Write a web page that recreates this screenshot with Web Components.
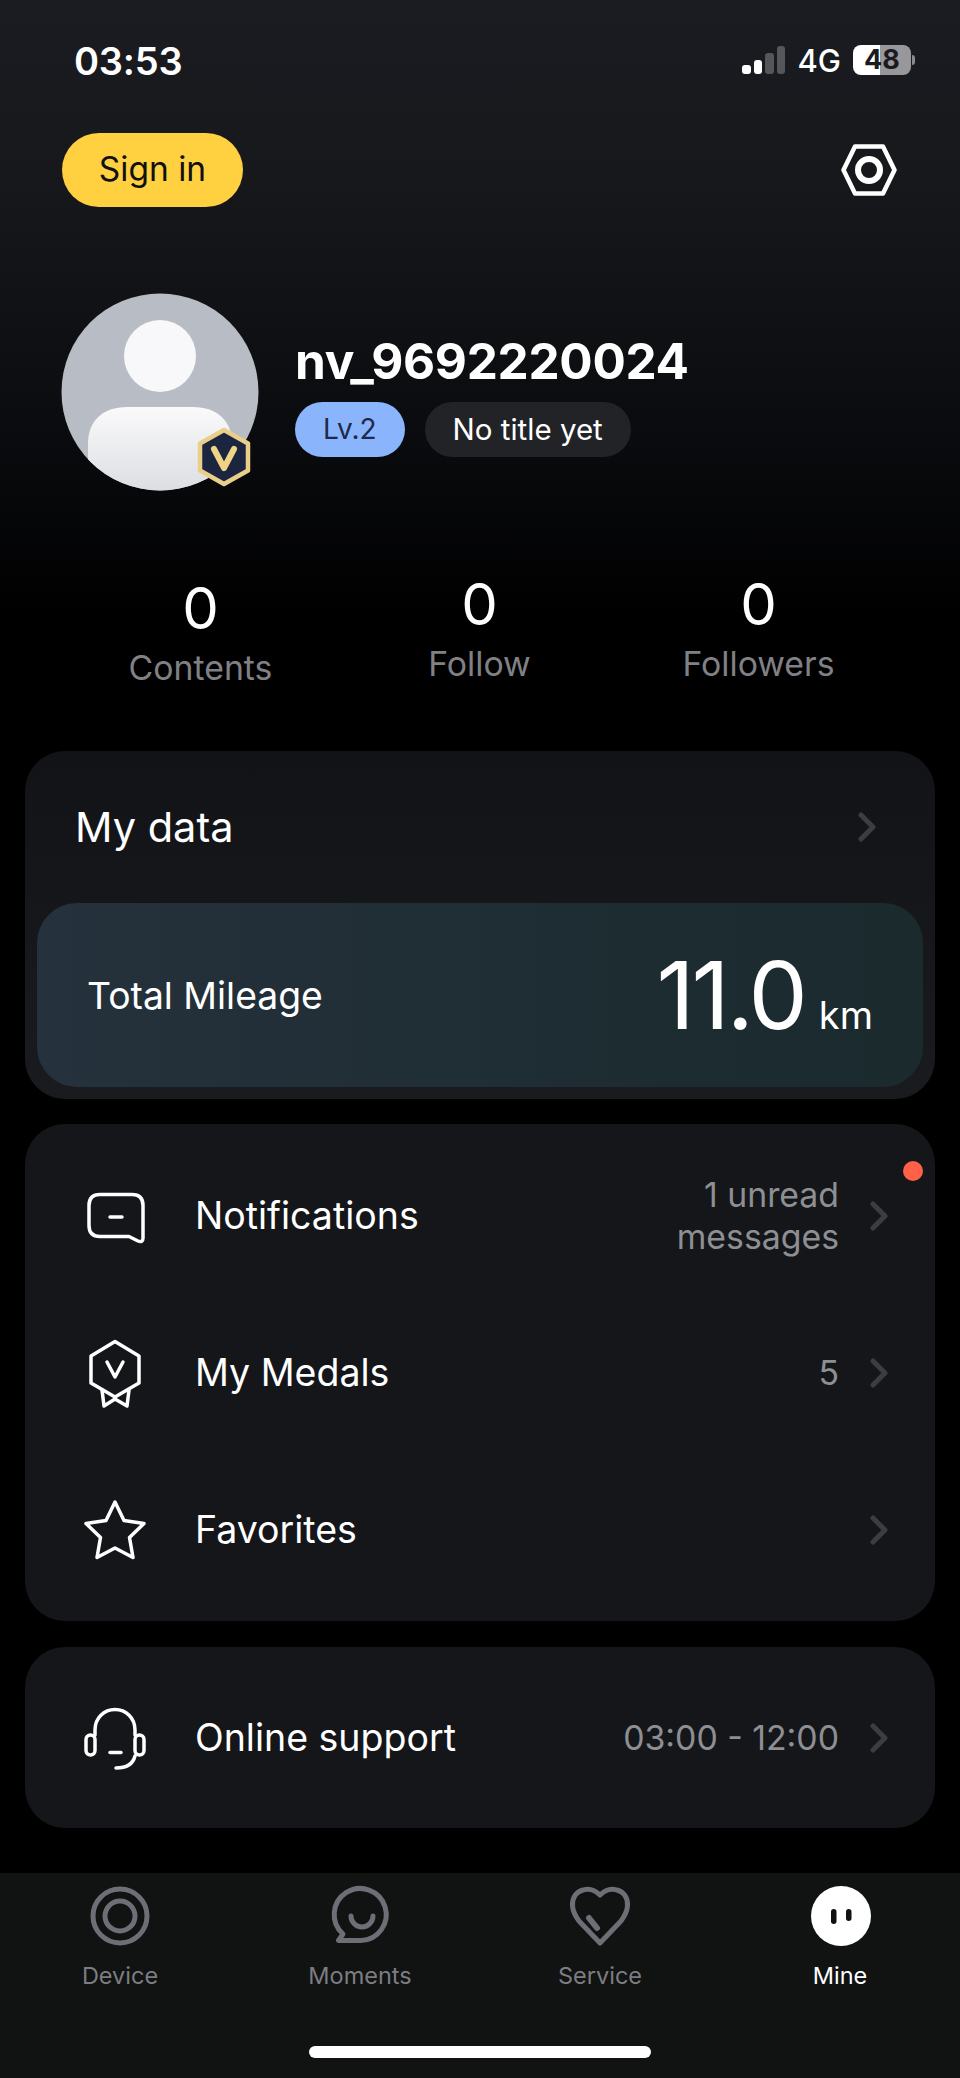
<!DOCTYPE html>
<html lang="en">
<head>
<meta charset="utf-8">
<title>Mine</title>
<style>
    html, body { margin: 0; padding: 0; background: #000; }
    body { font-family: Inter, "Liberation Sans", sans-serif; color: #fff; }
    svg { display: block; overflow: visible; }
</style>
</head>
<body>
<app-page>
    <status-bar time="03:53" network="4G" battery="48"></status-bar>
    <top-actions></top-actions>
    <profile-head name="nv_9692220024" level="Lv.2" title="No title yet"></profile-head>
    <stat-row>
        <stat-item value="0" label="Contents" class="low"></stat-item>
        <stat-item value="0" label="Follow"></stat-item>
        <stat-item value="0" label="Followers"></stat-item>
    </stat-row>
    <data-card title="My data" label="Total Mileage" value="11.0" unit="km"></data-card>
    <menu-card style="margin-top:25px">
        <menu-row label="Notifications" dot>
            <svg slot="icon" width="60" height="54" viewBox="0 0 60 54" fill="none" stroke="#fff" stroke-width="3.500" stroke-linecap="round" stroke-linejoin="round">
                <path d="M15 5.500H47Q58 5.500 58 16.500V49Q58 54 53 52L44 47.500H15Q4 47.500 4 36.500V16.500Q4 5.500 15 5.500Z"/>
                <path d="M25 28H37"/>
            </svg>
            <span slot="value">1 unread<br>messages</span>
        </menu-row>
        <menu-row label="My Medals" value="5">
            <svg slot="icon" width="60" height="72" viewBox="0 0 60 72" fill="none" stroke="#fff" stroke-width="3.500" stroke-linecap="round" stroke-linejoin="round">
                <path d="M30 4.500L54 19V46L30 60L6 46V19Z"/>
                <path d="M22 25L30 40L38 25"/>
                <path d="M17 53L19 69L30 62L42 69L44 53"/>
            </svg>
        </menu-row>
        <menu-row label="Favorites">
            <svg slot="icon" width="64" height="62" viewBox="0 0 64 62" fill="none" stroke="#fff" stroke-width="3.500" stroke-linecap="round" stroke-linejoin="round">
                <path d="M32 3L41 21.500L61 24.500L46.500 38.500L50 58.500L32 49L14 58.500L17.500 38.500L3 24.500L23 21.500Z"/>
            </svg>
        </menu-row>
    </menu-card>
    <menu-card style="margin-top:26px">
        <menu-row label="Online support" value="03:00 - 12:00" style="--row:155px">
            <svg slot="icon" width="64" height="62" viewBox="0 0 64 62" fill="none" stroke="#fff" stroke-width="3.500" stroke-linecap="round" stroke-linejoin="round">
                <path d="M12 28V23C12 11 21 2.500 32 2.500S52 11 52 23V28"/>
                <rect x="3" y="28" width="9" height="20" rx="4.500"/>
                <rect x="52" y="28" width="9" height="20" rx="4.500"/>
                <path d="M27 45.500H38"/>
                <path d="M52 49C50 57 44 61 33 61"/>
            </svg>
        </menu-row>
    </menu-card>
    <tab-bar>
        <tab-item label="Device">
            <svg width="62" height="62" viewBox="0 0 62 62" fill="none" stroke="#6d6e76" stroke-width="5">
                <circle cx="31" cy="31" r="27"/>
                <circle cx="31" cy="31" r="15"/>
            </svg>
        </tab-item>
        <tab-item label="Moments">
            <svg width="62" height="62" viewBox="0 0 62 62" fill="none" stroke="#6d6e76" stroke-width="5" stroke-linecap="round" stroke-linejoin="round">
                <path d="M9.500 55.500H32A26 26 0 1 0 14 49Z"/>
                <path d="M22 31A11 11 0 0 0 44 31"/>
            </svg>
        </tab-item>
        <tab-item label="Service">
            <svg width="62" height="62" viewBox="0 0 62 62" fill="none" stroke="#6d6e76" stroke-width="5" stroke-linecap="round" stroke-linejoin="round">
                <path d="M31 10C26 5 20 3 14 5C7 7 3 13 3.500 21C4 27 7 32 10 36L31 58L52 36C55 32 58 27 58.500 21C59 13 55 7 48 5C42 3 36 5 31 10Z"/>
                <path d="M20 33L28 43" stroke-width="6"/>
            </svg>
        </tab-item>
        <tab-item label="Mine" active>
            <svg width="62" height="62" viewBox="0 0 62 62">
                <circle cx="32" cy="31" r="30" fill="#fff"/>
                <rect x="22" y="24" width="5.500" height="15" rx="2.750" fill="#111"/>
                <rect x="37" y="24" width="5.500" height="12" rx="2.750" fill="#111"/>
            </svg>
        </tab-item>
    </tab-bar>
</app-page>

<script>
// small helper so each element only declares its style + markup
const mount = (el, html) => {
    el.attachShadow({ mode: 'open' });
    el.shadowRoot.innerHTML = html;
};

const chevron = `<svg width="18" height="30" viewBox="0 0 18 30" fill="none" stroke="#3c3d42" stroke-width="5" stroke-linecap="round" stroke-linejoin="round"><path d="M3 3L15 15L3 27"/></svg>`;

class AppPage extends HTMLElement {
    connectedCallback() {
        mount(this, `
            <style>
                :host {
                    display: flex;
                    flex-direction: column;
                    width: 960px;
                    height: 2078px;
                    overflow: hidden;
                    background: linear-gradient(#1b1c21 0, #17181c 180px, #0a0b0e 440px, #000 620px);
                }
            </style>
            <slot></slot>
        `);
    }
}

class StatusBar extends HTMLElement {
    connectedCallback() {
        const pct = this.getAttribute('battery');
        mount(this, `
            <style>
                :host { display: flex; align-items: center; justify-content: space-between; height: 120px; padding: 0 45px 0 74px; box-sizing: border-box; }
                .time { font-size: 38px; font-weight: 600; letter-spacing: -0.2px; padding-top: 2px; }
                .right { display: flex; align-items: center; }
                .net { font-size: 31px; font-weight: 500; margin: 0 12px 0 12px; }
                .bars { display: flex; align-items: flex-end; gap: 3px; height: 28px; }
                .bars i { display: block; width: 8.500px; border-radius: 3px; background: #555659; }
                .bars i.on { background: #fff; }
                .batt { display: flex; align-items: center; }
                .cell {
                    width: 58px; height: 30px; border-radius: 8px;
                    background: linear-gradient(90deg, #fff 0 47%, #98989a 47%);
                    color: #1a1b20; font-size: 27px; font-weight: 700; line-height: 30px; text-align: center;
                }
                .nub { width: 3px; height: 10px; margin-left: 1px; border-radius: 0 3px 3px 0; background: #8a8a8c; }
            </style>
            <span class="time">${this.getAttribute('time')}</span>
            <div class="right">
                <div class="bars">
                    <i class="on" style="height:9px"></i><i class="on" style="height:14px"></i><i style="height:21px"></i><i style="height:28px"></i>
                </div>
                <span class="net">${this.getAttribute('network')}</span>
                <div class="batt"><div class="cell">${pct}</div><div class="nub"></div></div>
            </div>
        `);
    }
}

class TopActions extends HTMLElement {
    connectedCallback() {
        mount(this, `
            <style>
                :host { display: flex; align-items: center; justify-content: space-between; height: 74px; margin-top: 13px; padding: 0 63px 0 62px; box-sizing: border-box; }
                .sign {
                    display: flex; align-items: center; justify-content: center;
                    width: 181px; height: 74px; border-radius: 37px;
                    background: #ffd040; color: #111; font-size: 33.500px; padding-bottom: 2px; box-sizing: border-box;
                }
            </style>
            <div class="sign">Sign in</div>
            <svg width="56" height="52" viewBox="0 0 56 52" fill="none" stroke="#fff" stroke-linejoin="round">
                <path d="M14 2.500H42L53.500 26L42 49.500H14L2.500 26Z" stroke-width="4.500"/>
                <circle cx="28" cy="26" r="11" stroke-width="6"/>
            </svg>
        `);
    }
}

class ProfileHead extends HTMLElement {
    connectedCallback() {
        mount(this, `
            <style>
                :host { display: flex; align-items: center; gap: 36px; margin-top: 86px; padding: 0 61px; }
                .avatar { position: relative; flex: none; width: 198px; height: 198px; }
                .photo { position: absolute; inset: 0; }
                .badge { position: absolute; left: 136px; top: 134px; }
                .info { display: flex; flex-direction: column; margin-top: 4px; }
                .name { font-size: 49.500px; font-weight: 700; line-height: 58px; letter-spacing: -0.3px; }
                .pills { display: flex; gap: 20px; margin-top: 12px; }
                .pill { display: flex; align-items: center; height: 55px; border-radius: 28px; padding: 0 28px; box-sizing: border-box; }
                .lv { background: #8ab4fb; color: #1d2a4b; font-size: 28px; }
                .tt { background: #222327; color: #fff; font-size: 29.500px; }
            </style>
            <div class="avatar">
                <svg class="photo" width="198" height="198" viewBox="0 0 198 198">
                    <defs>
                        <clipPath id="c"><circle cx="99" cy="99" r="98.500"/></clipPath>
                        <linearGradient id="g" x1="0" y1="0" x2="0" y2="1"><stop offset="0" stop-color="#fafafb"/><stop offset="1" stop-color="#dcdee2"/></linearGradient>
                    </defs>
                    <circle cx="99" cy="99" r="98.500" fill="#b8bcc5"/>
                    <circle cx="99" cy="63" r="36" fill="#f8f8fa"/>
                    <path clip-path="url(#c)" d="M27 198V150C27 128 42 114 66 114H132C156 114 171 128 171 150V198Z" fill="url(#g)"/>
                </svg>
                <svg class="badge" width="54" height="60" viewBox="0 0 54 60">
                    <path d="M27 3L51 16.500V43.500L27 57L3 43.500V16.500Z" fill="#1c2540" stroke="#e9cf8a" stroke-width="4.500" stroke-linejoin="round"/>
                    <path d="M17 22L27 41L37 22" fill="none" stroke="#f0d486" stroke-width="6" stroke-linecap="round" stroke-linejoin="round"/>
                </svg>
            </div>
            <div class="info">
                <div class="name">${this.getAttribute('name')}</div>
                <div class="pills">
                    <div class="pill lv">${this.getAttribute('level')}</div>
                    <div class="pill tt">${this.getAttribute('title')}</div>
                </div>
            </div>
        `);
    }
}

class StatRow extends HTMLElement {
    connectedCallback() {
        mount(this, `
            <style>
                :host { display: grid; grid-template-columns: repeat(3, 279px); margin-top: 83px; padding: 0 61px; height: 124px; }
            </style>
            <slot></slot>
        `);
    }
}

class StatItem extends HTMLElement {
    connectedCallback() {
        mount(this, `
            <style>
                :host { display: flex; flex-direction: column; align-items: center; }
                :host(.low) { margin-top: 4px; }
                .v { font-size: 58px; line-height: 60px; }
                .l { font-size: 33.800px; line-height: 44px; color: #808185; margin-top: 8px; }
            </style>
            <div class="v">${this.getAttribute('value')}</div>
            <div class="l">${this.getAttribute('label')}</div>
        `);
    }
}

class DataCard extends HTMLElement {
    connectedCallback() {
        mount(this, `
            <style>
                :host { display: block; margin: 53px 25px 0; padding: 0 12px 12px; border-radius: 40px; background: linear-gradient(#121317, #1a1b1f); }
                .head { display: flex; align-items: center; justify-content: space-between; height: 152px; padding: 0 47px 0 38px; font-size: 41.500px; }
                .mile {
                    display: flex; align-items: center; justify-content: space-between;
                    height: 184px; padding: 0 50px; border-radius: 40px;
                    background: linear-gradient(90deg, #25313c, #1a2a2d);
                }
                .label { font-size: 37.300px; }
                .val { display: flex; align-items: baseline; gap: 14px; }
                .num { font-size: 94px; letter-spacing: -3px; }
                .unit { font-size: 38px; }
            </style>
            <div class="head"><span>${this.getAttribute('title')}</span>${chevron}</div>
            <div class="mile">
                <span class="label">${this.getAttribute('label')}</span>
                <span class="val"><span class="num">${this.getAttribute('value')}</span><span class="unit">${this.getAttribute('unit')}</span></span>
            </div>
        `);
    }
}

class MenuCard extends HTMLElement {
    connectedCallback() {
        mount(this, `
            <style>
                :host { display: block; margin: 0 25px; padding: 13px 0; border-radius: 40px; background: #14161a; }
            </style>
            <slot></slot>
        `);
    }
}

class MenuRow extends HTMLElement {
    connectedCallback() {
        const value = this.getAttribute('value') || '';
        const dot = this.hasAttribute('dot') ? '<span class="dot"></span>' : '';
        mount(this, `
            <style>
                :host { display: flex; align-items: center; position: relative; height: var(--row, 157px); padding: 0 47px 0 50px; }
                .icon { flex: none; display: flex; justify-content: center; width: 80px; margin-right: 40px; }
                .label { flex: 1; font-size: 37.500px; }
                .value { text-align: right; font-size: 33.800px; line-height: 42px; color: #8e8f93; margin-right: 31px; }
                .dot { position: absolute; left: 878px; top: 24px; width: 20px; height: 20px; border-radius: 50%; background: #ff6048; }
            </style>
            <div class="icon"><slot name="icon"></slot></div>
            <div class="label">${this.getAttribute('label')}</div>
            <div class="value"><slot name="value">${value}</slot></div>
            ${chevron}
            ${dot}
        `);
    }
}

class TabBar extends HTMLElement {
    connectedCallback() {
        mount(this, `
            <style>
                :host { display: block; margin-top: 45px; flex: 1; background: #111212; }
                .items { display: grid; grid-template-columns: repeat(4, 240px); padding-top: 12px; }
                .home { display: block; width: 342px; height: 12px; margin: 52px auto 0; border-radius: 6px; background: #fff; }
            </style>
            <div class="items"><slot></slot></div>
            <div class="home"></div>
        `);
    }
}

class TabItem extends HTMLElement {
    connectedCallback() {
        const active = this.hasAttribute('active');
        mount(this, `
            <style>
                :host { display: flex; flex-direction: column; align-items: center; gap: 11px; }
                .label { font-size: 23.500px; line-height: 36px; color: ${active ? '#fff' : '#7c7d81'}; }
            </style>
            <slot></slot>
            <div class="label">${this.getAttribute('label')}</div>
        `);
    }
}

customElements.define('app-page', AppPage);
customElements.define('status-bar', StatusBar);
customElements.define('top-actions', TopActions);
customElements.define('profile-head', ProfileHead);
customElements.define('stat-row', StatRow);
customElements.define('stat-item', StatItem);
customElements.define('data-card', DataCard);
customElements.define('menu-card', MenuCard);
customElements.define('menu-row', MenuRow);
customElements.define('tab-bar', TabBar);
customElements.define('tab-item', TabItem);
</script>
</body>
</html>
